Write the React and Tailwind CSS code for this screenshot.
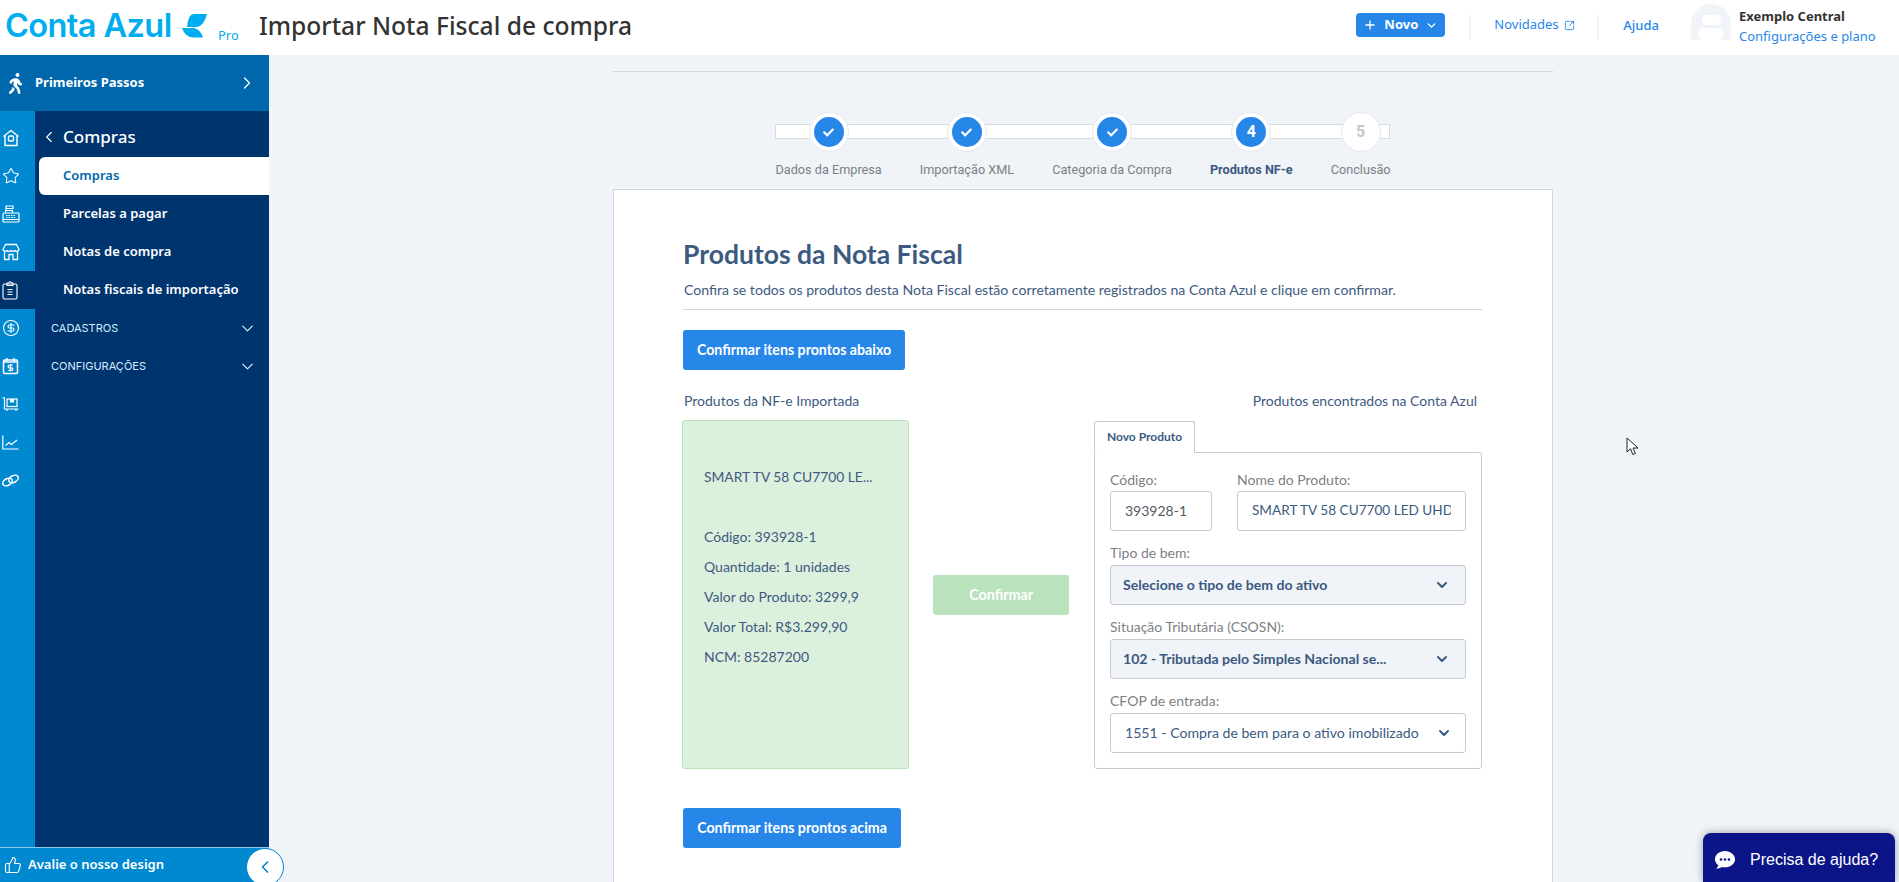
import React from "react";
import { ChevronRight, ChevronLeft, ChevronDown, Plus, Star, CircleDollarSign, ThumbsUp, SquareArrowOutUpRight } from "lucide-react";
import { FaWalking, FaCheck } from "react-icons/fa";

const Home = () => (
  <svg width="18" height="18" viewBox="0 0 18 18" fill="none" stroke="currentColor" strokeWidth="1.4" strokeLinejoin="round">
    <path d="M1.500 7.500 9 1.500l7.500 6M3 6.500v10h12v-10" />
    <rect x="6.500" y="7" width="5" height="5" rx="1" />
  </svg>
);
const Register = () => (
  <svg width="18" height="18" viewBox="0 0 18 18" fill="none" stroke="currentColor" strokeWidth="1.200">
    <rect x="1" y="8" width="16" height="9" rx="1" />
    <path d="M3.500 8V5.500h7V8M4 5.500V1h7v2.500H4M1 14.500h16" />
    <path d="M4 10.500h10M4 12.500h10" strokeDasharray="1.500 1" />
  </svg>
);
const Shop = () => (
  <svg width="18" height="18" viewBox="0 0 18 18" fill="none" stroke="currentColor" strokeWidth="1.300" strokeLinejoin="round">
    <path d="M3.500 1.500h11L17 6.500a2.300 2.300 0 0 1-4 1 2.800 2.800 0 0 1-4 0 2.800 2.800 0 0 1-4 0 2.300 2.300 0 0 1-4-1Z" />
    <path d="M2.500 9v7.500h4.500v-5h4v5h4.500V9" />
  </svg>
);
const Clip = () => (
  <svg width="16" height="19" viewBox="0 0 16 19" fill="none" stroke="currentColor" strokeWidth="1.100" strokeLinejoin="round">
    <rect x="1" y="3" width="14" height="15" rx="1.500" />
    <path d="M5 4.500V2h1.800a1.200 1.200 0 0 1 2.400 0H11v2.500Z" />
    <path d="M5.500 8.500h5M5.500 11h5M5.500 13.500h5" />
  </svg>
);
const CalendarDollar = () => (
  <svg width="17" height="18" viewBox="0 0 17 18" fill="none" stroke="currentColor" strokeWidth="1.500">
    <rect x="1.500" y="3" width="14" height="13.500" rx="1" />
    <path d="M5 1v3M12 1v3M1.500 5h14" />
    <path d="M10.700 8.200H7.400a1.200 1.200 0 0 0 0 2.600h2.200a1.200 1.200 0 0 1 0 2.600H6.300M8.500 7v7.500" strokeWidth="1.200" />
  </svg>
);
const Cart = () => (
  <svg width="17" height="15" viewBox="0 0 17 15" fill="none" stroke="currentColor" strokeWidth="1.200">
    <path d="M0.500 0.800H2.500V12H16.500" />
    <rect x="5" y="2" width="10" height="7.500" />
    <path d="M8.500 2v3h3V2" fill="currentColor" />
    <path d="M5 12v2M14 12v2" />
  </svg>
);
const ChartLine = () => (
  <svg width="17" height="15" viewBox="0 0 17 15" fill="none" stroke="currentColor" strokeWidth="1.200">
    <path d="M0.800 0.500V14H16.500" />
    <path d="M3.500 10.500 7 7.500l2.500 2L15 5" />
  </svg>
);
const Chain = () => (
  <svg width="17" height="13" viewBox="0 0 17 13" fill="none" stroke="currentColor" strokeWidth="1.500">
    <ellipse cx="5.500" cy="8" rx="5" ry="3.400" transform="rotate(-28 5.500 8)" />
    <ellipse cx="11.500" cy="5" rx="5" ry="3.400" transform="rotate(-28 11.500 5)" />
  </svg>
);

const railIcons = [
  { icon: <Home /> },
  { icon: <Star size={18} strokeWidth={1.4} /> },
  { icon: <Register /> },
  { icon: <Shop /> },
  { icon: <Clip />, active: true },
  { icon: <CircleDollarSign size={18} strokeWidth={1.5} /> },
  { icon: <CalendarDollar /> },
  { icon: <Cart /> },
  { icon: <ChartLine /> },
  { icon: <Chain /> },
];

const steps = [
  { label: "Dados da Empresa", done: true },
  { label: "Importação XML", done: true },
  { label: "Categoria da Compra", done: true },
  { label: "Produtos NF-e", n: 4, current: true },
  { label: "Conclusão", n: 5 },
];

const details = ["Código: 393928-1", "Quantidade: 1 unidades", "Valor do Produto: 3299,9", "Valor Total: R$3.299,90", "NCM: 85287200"];

function Logo() {
  return (
    <div className="flex items-center w-[259px] shrink-0 pl-[5px]">
      <span className="w-[177px] font-['Inter'] text-[32.500px] font-semibold tracking-[-0.6px] leading-none text-[#00aeef] whitespace-nowrap">Conta Azul</span>
      <svg className="-mt-[2px]" width="26" height="24" viewBox="0 0 26 24" fill="#00aeef">
        <path d="M25 0H12Q6 0 5 13H15Q22 12 25 0Z" />
        <path d="M0 14H12Q19 16 21 23.500H11Q3 23 0 14Z" />
      </svg>
      <span className="ml-[10px] mt-[18px] font-['Noto_Sans'] text-[13px] text-[#00aeef] leading-none">Pro</span>
    </div>
  );
}

function Header() {
  return (
    <header className="h-[55px] bg-white flex items-center shrink-0 pb-[2px]">
      <Logo />
      <h1 className="font-['Noto_Sans'] text-[24.600px] font-medium text-[#333] whitespace-nowrap">Importar Nota Fiscal de compra</h1>
      <div className="ml-auto -mt-[3px] flex items-center font-['Noto_Sans'] text-[13px] text-[#2687e9]">
        <button className="w-[89px] h-6 rounded bg-[#2687e9] text-white font-bold text-[13px] flex items-center justify-center gap-[7px]">
          <Plus size={14} strokeWidth={2.2} />
          <span>Novo</span>
          <ChevronDown size={13} strokeWidth={2.5} />
        </button>
        <div className="w-[2px] h-6 bg-[#f0f3f8] ml-[24px] mt-1" />
        <div className="flex items-center gap-[5px] pl-[23px] w-[126px]">
          <span>Novidades</span>
          <SquareArrowOutUpRight size={11} strokeWidth={2} />
        </div>
        <div className="w-[2px] h-6 bg-[#f0f3f8] mt-1" />
        <span className="ml-[24px] font-medium mt-[2px]">Ajuda</span>
        <div className="ml-[32px] w-[40px] h-[36px] mt-[-7px] rounded-t-full overflow-hidden bg-[#f0f3f8] flex flex-col items-center">
          <div className="w-[19px] h-[19px] rounded-full bg-white mt-[11px]" />
          <div className="w-[26px] h-[20px] rounded-full bg-white mt-[3px]" />
        </div>
        <div className="ml-[8px] w-[160px] flex flex-col gap-[3px] leading-[17px] pt-[2px]">
          <span className="font-bold text-[#333] text-[13px]">Exemplo Central</span>
          <span>Configurações e plano</span>
        </div>
      </div>
    </header>
  );
}

function Sidebar() {
  return (
    <aside className="w-[269px] shrink-0 flex flex-col bg-[#00346f] text-white font-['Noto_Sans']">
      <div className="h-[56px] bg-[#0067ac] flex items-center shrink-0">
        <div className="w-[28px] pl-[5px]"><FaWalking size={21} /></div>
        <span className="ml-[7px] font-bold text-[13px]">Primeiros Passos</span>
        <ChevronRight className="ml-auto mr-[12px]" size={20} strokeWidth={1.5} />
      </div>
      <div className="flex-1 flex min-h-0">
        <div className="w-[35px] shrink-0 flex flex-col">
          <div className="h-2 bg-[#0088d1]" />
          {railIcons.map((r, i) => (
            <div key={i} className={`h-[38px] flex items-center pl-[2px] ${r.active ? "" : "bg-[#0088d1]"}`}>{r.icon}</div>
          ))}
          <div className="flex-1 bg-[#0088d1]" />
        </div>
        <div className="flex-1 min-w-0">
          <div className="h-[46px] flex items-center pt-[6px]">
            <ChevronLeft className="ml-[5px]" size={18} strokeWidth={1.5} />
            <span className="ml-[5px] text-[17px] font-medium">Compras</span>
          </div>
          <div className="ml-1 h-[38px] bg-white rounded-l-md flex items-center pl-6 font-semibold text-[13px] text-[#0067ac]">Compras</div>
          {["Parcelas a pagar", "Notas de compra", "Notas fiscais de importação"].map((t) => (
            <div key={t} className="ml-1 h-[38px] flex items-center pl-6 font-semibold text-[13px]">{t}</div>
          ))}
          {["CADASTROS", "CONFIGURAÇÕES"].map((t) => (
            <div key={t} className="h-[38px] flex items-center pl-4 pr-3 justify-between text-[11px] text-[#d5eeff] font-['Inter']">
              {t}
              <ChevronDown size={19} strokeWidth={1.5} />
            </div>
          ))}
        </div>
      </div>
      <div className="relative h-[35px] shrink-0 bg-[#0088d1] border-t border-[#8cc8ea] flex items-center pl-[4px] gap-[6px]">
        <ThumbsUp size={18} strokeWidth={1.5} />
        <span className="font-semibold text-[13px]">Avalie o nosso design</span>
        <div className="absolute left-[246px] top-0 w-[38px] h-[38px] rounded-full bg-white border border-[#0088d1] flex items-center justify-center text-[#0088d1]">
          <ChevronLeft size={20} strokeWidth={2} />
        </div>
      </div>
    </aside>
  );
}

function Stepper() {
  return (
    <div className="relative mt-10 flex justify-center gap-[38px]">
      <div className="absolute left-[162px] top-3 w-[615px] h-[15px] bg-white border border-[#d6dae1]" />
      {steps.map((s) => (
        <div key={s.label} className="relative flex flex-col items-center">
          <div className="w-10 h-10 rounded-full bg-white border border-[#e6e9ef] flex items-center justify-center">
            {s.done || s.current ? (
              <div className="w-[30px] h-[30px] rounded-full bg-[#2687e9] text-white flex items-center justify-center font-['Roboto'] font-bold text-[16px]">
                {s.done ? <FaCheck size={11} /> : s.n}
              </div>
            ) : (
              <span className="font-['Roboto'] font-bold text-[16px] text-[#c4c8ce]">{s.n}</span>
            )}
          </div>
          <span className={`mt-[10px] h-4 leading-4 whitespace-nowrap font-['Roboto'] text-[12.700px] ${s.current ? "font-bold text-[#3b5a80]" : "text-[#7d7f85]"}`}>{s.label}</span>
        </div>
      ))}
    </div>
  );
}

function Select({ children, plain }) {
  return (
    <div className={`h-10 rounded-[3px] border border-[#c5cad3] flex items-center text-[14.100px] ${plain ? "pl-[14px] pr-[13px] text-[#3b5a80]" : "pl-3 pr-[15px] bg-[#f0f3f8] font-bold text-[#3b5a80]"}`}>
      <span className="whitespace-nowrap">{children}</span>
      <ChevronDown className="ml-auto" size={16} strokeWidth={3} />
    </div>
  );
}

function Field({ label, children, className = "" }) {
  return (
    <div className={className}>
      <div className="h-[18px] leading-[18px] text-[14px] text-[#7d7f85] whitespace-nowrap mb-[2px]">{label}</div>
      {children}
    </div>
  );
}

function ProductCard() {
  return (
    <div className="mt-[9px] -ml-px flex items-center">
      <div className="w-[228px] h-[349px] rounded-[3px] bg-[#dcf0de] border border-[#b9e2bd] pl-[21px] pt-[41px] text-[14px] text-[#3e5a80]">
        <div className="h-[30px] leading-[30px] mb-[30px] text-[13.800px]">SMART TV 58 CU7700 LE...</div>
        {details.map((d) => <div key={d} className="h-[30px] leading-[30px]">{d}</div>)}
      </div>
      <button className="ml-6 w-[136px] h-10 rounded-[3px] bg-[#b9e2bd] text-white font-bold text-[14.300px]">Confirmar</button>
      <div className="ml-[25px] w-[388px]">
        <div className="relative z-10 w-[101px] h-[32px] -mb-px bg-white border border-b-0 border-[#c5cad3] rounded-t-[3px] flex items-center justify-center font-bold text-[12px] text-[#3b5a80]">Novo Produto</div>
        <div className="h-[317px] border border-[#c5cad3] rounded-[3px] pt-[18px] px-[15px]">
          <div className="flex gap-[25px]">
            <Field label="Código:" className="w-[102px]">
              <div className="h-10 rounded-[3px] border border-[#c5cad3] flex items-center pl-[14px] text-[14px] text-[#555b66]">393928-1</div>
            </Field>
            <Field label="Nome do Produto:" className="flex-1 min-w-0">
              <div className="h-10 rounded-[3px] border border-[#c5cad3] flex items-center px-[14px] text-[13.600px] text-[#3b5a80]">
                <span className="whitespace-nowrap overflow-hidden">SMART TV 58 CU7700 LED UHD 4K</span>
              </div>
            </Field>
          </div>
          <div className="mt-[13px] h-[18px] leading-[18px] text-[14px] text-[#7d7f85] mb-[3px]">Tipo de bem:</div>
          <Select>Selecione o tipo de bem do ativo</Select>
          <div className="mt-[13px] h-[18px] leading-[18px] text-[14px] text-[#7d7f85] mb-[3px]">Situação Tributária (CSOSN):</div>
          <Select>102 - Tributada pelo Simples Nacional se...</Select>
          <div className="mt-[13px] h-[18px] leading-[18px] text-[14px] text-[#7d7f85] mb-[3px]">CFOP de entrada:</div>
          <Select plain>1551 - Compra de bem para o ativo imobilizado</Select>
        </div>
      </div>
    </div>
  );
}

function Main() {
  return (
    <main className="flex-1 min-w-0 bg-[#f0f3f8] overflow-hidden pl-[344px]">
      <div className="w-[940px] font-['Lato']">
        <div className="mt-4 h-px bg-[#d0d5de]" />
        <Stepper />
        <section className="mt-[11px] bg-white border border-[#d0d5de] pt-[49px] pl-[69px] h-[800px]">
          <div className="w-[799px]">
            <h2 className="h-[30px] leading-[30px] text-[26.500px] font-bold text-[#3b5a80]">Produtos da Nota Fiscal</h2>
            <p className="mt-[11px] h-5 leading-5 text-[14.100px] text-[#3e5a80] pl-px">Confira se todos os produtos desta Nota Fiscal estão corretamente registrados na Conta Azul e clique em confirmar.</p>
            <div className="mt-[9px] h-px bg-[#d0d5de]" />
            <button className="mt-5 w-[222px] h-10 rounded-[3px] bg-[#2687e9] text-white font-bold text-[14.200px]">Confirmar itens prontos abaixo</button>
            <div className="mt-[21px] h-5 leading-5 flex justify-between text-[14px] text-[#3e5a80] pl-px pr-[5px]">
              <span>Produtos da NF-e Importada</span>
              <span>Produtos encontrados na Conta Azul</span>
            </div>
            <ProductCard />
            <button className="mt-[39px] w-[218px] h-10 rounded-[3px] bg-[#2687e9] text-white font-bold text-[14.200px]">Confirmar itens prontos acima</button>
          </div>
        </section>
      </div>
    </main>
  );
}

export default function App() {
  return (
    <div className="relative h-screen w-full overflow-hidden flex flex-col bg-[#f0f3f8]">
      <Header />
      <div className="flex-1 flex min-h-0">
        <Sidebar />
        <Main />
      </div>
      <svg className="absolute left-[1626px] top-[437px]" width="13" height="19" viewBox="0 0 13 19" fill="white" stroke="#222" strokeWidth="1">
        <path d="M1 1v14l3.500-3.300 2.300 5.800 2.600-1-2.400-5.500H12Z" />
      </svg>
      <div className="absolute left-[1703px] top-[833px] w-[192px] h-[49px] rounded-t-lg bg-[#0c1588] text-white flex items-center pl-[12px] pt-[5px] shadow-[0_0_8px_rgba(0,0,0,0.35)] font-['Liberation_Sans'] text-[16px]">
        <svg width="20" height="18" viewBox="0 0 20 18" fill="white">
          <path d="M10 0C4.500 0 0 3.600 0 8.200c0 2.400 1.200 4.500 3.200 6-.2 1.300-1 2.500-2.200 3.400 2.200 0 4.300-.6 5.800-1.700 1 .3 2.100.4 3.200.4 5.500 0 10-3.600 10-8.100S15.500 0 10 0Z" />
          <circle cx="6" cy="8.500" r="1.300" fill="#0c1588" />
          <circle cx="10" cy="8.500" r="1.300" fill="#0c1588" />
          <circle cx="14" cy="8.500" r="1.300" fill="#0c1588" />
        </svg>
        <span className="ml-[15px]">Precisa de ajuda?</span>
      </div>
    </div>
  );
}
